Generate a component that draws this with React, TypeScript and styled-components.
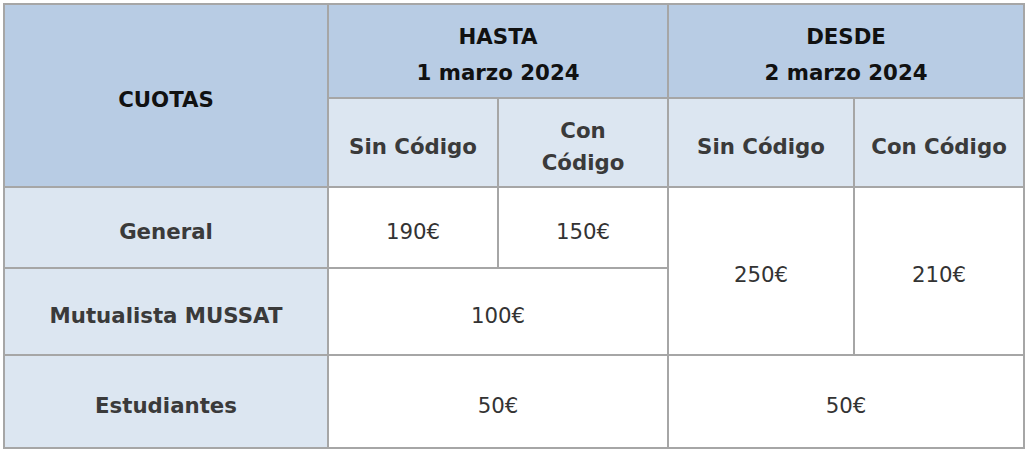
import styled, { createGlobalStyle } from "styled-components";

const GlobalStyle = createGlobalStyle`
  body {
    margin: 0;
    background: #ffffff;
    font-family: "DejaVu Sans", Verdana, sans-serif;
  }
`;

const Wrap = styled.div`
  padding: 3px 0 0 3px;
`;

const FeeTable = styled.table`
  border-collapse: collapse;
  table-layout: fixed;
  width: 1020px;
  border: 2px solid #a6a6a6;
  font-size: 21.3px;
`;

const Cell = styled.td<{ $tone?: "dark" | "light" | "white"; $h?: number }>`
  border: 2px solid #a6a6a6;
  text-align: center;
  vertical-align: middle;
  padding: 8px 2px 0;
  height: ${(p) => (p.$h ? `${p.$h}px` : "auto")};
  box-sizing: border-box;
  background: ${(p) =>
    p.$tone === "dark" ? "#b8cce4" : p.$tone === "light" ? "#dce6f1" : "#ffffff"};
  color: #333333;
  line-height: 32px;
  white-space: nowrap;
`;

const Head = styled(Cell).attrs({ as: "th" })`
  font-weight: bold;
  color: #111111;
  line-height: 36px;
`;

const SubHead = styled(Cell).attrs({ as: "th" })`
  font-weight: bold;
  color: #3a3a3a;
`;

const Label = styled(Cell).attrs({ as: "th" })`
  font-weight: bold;
  color: #3a3a3a;
`;

const App = () => {
  return (
    <>
      <GlobalStyle />
      <Wrap>
        <FeeTable>
          <colgroup>
            <col style={{ width: 324 }} />
            <col style={{ width: 170 }} />
            <col style={{ width: 170 }} />
            <col style={{ width: 186 }} />
            <col style={{ width: 170 }} />
          </colgroup>
          <thead>
            <tr>
              <Head $tone="dark" rowSpan={2}>
                CUOTAS
              </Head>
              <Head $tone="dark" colSpan={2} $h={94}>
                HASTA
                <br />1 marzo 2024
              </Head>
              <Head $tone="dark" colSpan={2} $h={94}>
                DESDE
                <br />2 marzo 2024
              </Head>
            </tr>
            <tr>
              <SubHead $tone="light" $h={89}>Sin Código</SubHead>
              <SubHead $tone="light" $h={89}>
                Con
                <br />
                Código
              </SubHead>
              <SubHead $tone="light" $h={89}>Sin Código</SubHead>
              <SubHead $tone="light" $h={89}>Con Código</SubHead>
            </tr>
          </thead>
          <tbody>
            <tr>
              <Label $tone="light" $h={81}>General</Label>
              <Cell $h={81}>190€</Cell>
              <Cell $h={81}>150€</Cell>
              <Cell rowSpan={2}>250€</Cell>
              <Cell rowSpan={2}>210€</Cell>
            </tr>
            <tr>
              <Label $tone="light" $h={87}>Mutualista MUSSAT</Label>
              <Cell colSpan={2} $h={87}>
                100€
              </Cell>
            </tr>
            <tr>
              <Label $tone="light" $h={93}>Estudiantes</Label>
              <Cell colSpan={2} $h={93}>
                50€
              </Cell>
              <Cell colSpan={2} $h={93}>
                50€
              </Cell>
            </tr>
          </tbody>
        </FeeTable>
      </Wrap>
    </>
  );
};

export default App;
